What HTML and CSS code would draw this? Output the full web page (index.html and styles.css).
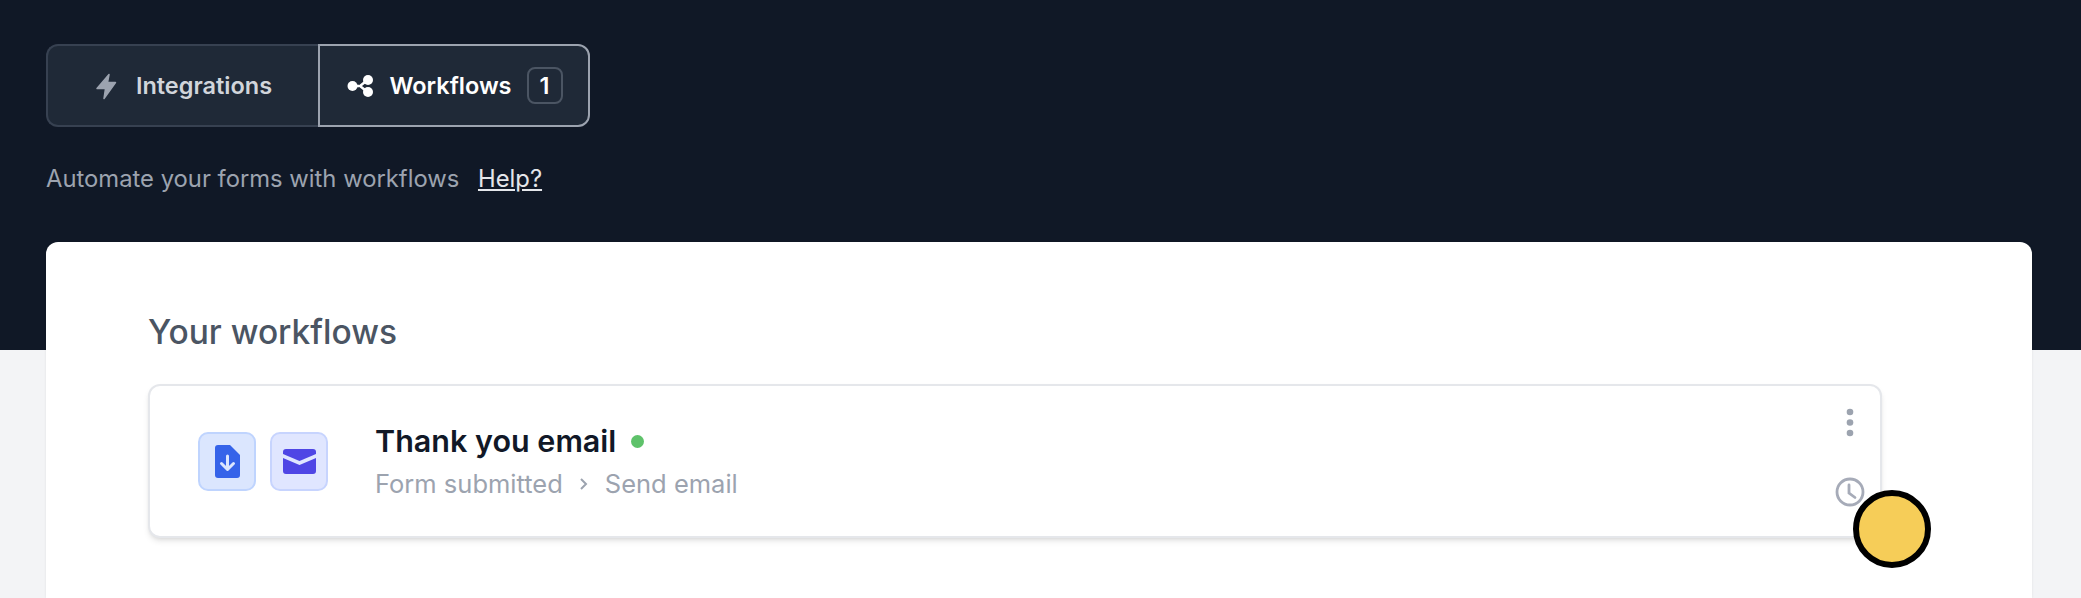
FILE: index.html
```html
<!DOCTYPE html>
<html>
<head>
  <title>Workflows</title>
  <link rel="stylesheet" href="styles.css">
</head>

<body>
  <div class="tabs">
    <a class="tab">
      <svg class="tab-icon" width="24" height="28" viewBox="0 0 24 28"><path d="M15 2.500 3 16.500h8.500L10 26.500 21.500 10.500h-8z" fill="#9ca3af" stroke="#9ca3af" stroke-width="1.500" stroke-linejoin="round"/></svg>
      <span>Integrations</span>
    </a>
    <a class="tab active">
      <svg class="tab-icon" width="27" height="26" viewBox="0 0 27 26"><path d="M5 13h7M20.500 7 13 13l7.500 6" fill="none" stroke="#fff" stroke-width="2.500"/><circle cx="5.500" cy="13" r="5" fill="#fff"/><circle cx="21" cy="7" r="5" fill="#fff"/><circle cx="21" cy="19" r="5" fill="#fff"/></svg>
      <span>Workflows</span>
      <span class="badge">1</span>
    </a>
  </div>

  <p class="intro">Automate your forms with workflows <a class="help">Help?</a></p>

  <div class="panel">
    <h2>Your workflows</h2>
    <div class="workflow">
      <div class="steps">
        <div class="step step-form">
          <svg width="25" height="33" viewBox="0 0 25 33"><path d="M3 0h12l10 10v20a3 3 0 0 1-3 3H3a3 3 0 0 1-3-3V3a3 3 0 0 1 3-3z" fill="#3563e9"/><path d="M12.500 11v13M6.500 18.500l6 6 6-6" fill="none" stroke="#dbe6fe" stroke-width="3" stroke-linecap="round" stroke-linejoin="round"/></svg>
        </div>
        <div class="step step-mail">
          <svg width="33" height="25" viewBox="0 0 33 25"><path d="M3 0h27a3 3 0 0 1 3 3v2l-16.500 7L0 5V3a3 3 0 0 1 3-3z" fill="#4f46e5"/><path d="M0 9l16.500 7L33 9v13a3 3 0 0 1-3 3H3a3 3 0 0 1-3-3z" fill="#4f46e5"/></svg>
        </div>
      </div>
      <div class="info">
        <div class="name">Thank you email <span class="dot"></span></div>
        <div class="desc">
          <span>Form submitted</span>
          <svg width="10" height="14" viewBox="0 0 10 14"><path d="m2 2 5 5-5 5" fill="none" stroke="#9ca3af" stroke-width="2"/></svg>
          <span>Send email</span>
        </div>
      </div>
      <div class="actions">
        <svg width="8" height="29" viewBox="0 0 8 29"><circle cx="4" cy="4" r="3.300" fill="#9ca3af"/><circle cx="4" cy="14.500" r="3.300" fill="#9ca3af"/><circle cx="4" cy="25" r="3.300" fill="#9ca3af"/></svg>
        <svg width="30" height="30" viewBox="0 0 30 30"><circle cx="15" cy="15" r="13" fill="none" stroke="#a6abb8" stroke-width="2.800"/><path d="M14 8v8l6 4.500" fill="none" stroke="#a6abb8" stroke-width="2.800" stroke-linecap="round"/></svg>
      </div>
    </div>
  </div>

  <div class="cursor"></div>
</body>

</html>
```

FILE: styles.css
```css
html,
body {
  height: 100%;
}

body {
  margin: 0;
  padding: 44px 49px 0 46px;
  box-sizing: border-box;
  overflow: hidden;
  position: relative;
  background: linear-gradient(#101826 350px, #f3f4f6 350px);
  font-family: "Inter", sans-serif;
}

.tabs {
  display: flex;
  width: 544px;
  height: 83px;
}

.tab {
  display: flex;
  align-items: center;
  justify-content: center;
  gap: 18px;
  box-sizing: border-box;
  background-color: #1f2937;
  border: 2px solid #374151;
  border-right: none;
  border-radius: 12px 0 0 12px;
  color: #d1d5db;
  font-size: 23.500px;
  font-weight: 600;
  width: 272px;
}

.tab.active {
  width: 272px;
  gap: 15px;
  padding-left: 2px;
  border: 2px solid #9ca3af;
  border-radius: 0 12px 12px 0;
  color: #fff;
}

.badge {
  display: flex;
  align-items: center;
  justify-content: center;
  width: 36px;
  height: 37px;
  box-sizing: border-box;
  border: 2px solid #4b5563;
  border-radius: 8px;
}

.intro {
  margin: 0;
  padding-top: 37px;
  height: 64px;
  box-sizing: border-box;
  color: #9ca3af;
  font-size: 23.800px;
  line-height: 30px;
}

.help {
  margin-left: 12px;
  color: #e5e7eb;
  text-decoration: underline;
}

.panel {
  margin-top: 51px;
  height: 356px;
  padding: 70px 150px 0 102px;
  box-sizing: border-box;
  background-color: #fff;
  border-radius: 12px 12px 0 0;
  box-shadow: 0 0 3px rgba(0, 0, 0, 0.08);
}

.panel h2 {
  margin: 0;
  color: #4b5563;
  font-size: 33.500px;
  font-weight: 500;
  line-height: 40px;
}

.workflow {
  display: flex;
  align-items: center;
  margin-top: 32px;
  height: 154px;
  box-sizing: border-box;
  padding: 0 24px 0 48px;
  border: 2px solid #e5e7eb;
  border-radius: 12px;
  background-color: #fff;
  box-shadow: 0 4px 6px -1px rgba(0, 0, 0, 0.1), 0 2px 4px -2px rgba(0, 0, 0, 0.1);
}

.steps {
  display: flex;
  gap: 14px;
}

.step {
  display: flex;
  align-items: center;
  justify-content: center;
  width: 58px;
  height: 59px;
  box-sizing: border-box;
  border-radius: 10px;
}

.step-form {
  background-color: #dbe6fe;
  border: 2px solid #bfd4fe;
}

.step-mail {
  background-color: #e0e6ff;
  border: 2px solid #c7d4fe;
}

.info {
  flex: 1;
  margin-left: 47px;
}

.name {
  display: flex;
  align-items: center;
  color: #111827;
  font-size: 30.500px;
  font-weight: 600;
  line-height: 40px;
}

.dot {
  width: 13px;
  height: 13px;
  margin-left: 15px;
  border-radius: 50%;
  background-color: #5ec26a;
}

.desc {
  display: flex;
  align-items: center;
  gap: 16px;
  margin-top: 6px;
  color: #9ca3af;
  font-size: 25.500px;
  line-height: 34px;
}

.actions {
  display: flex;
  flex-direction: column;
  align-items: center;
  justify-content: space-between;
  height: 99px;
  margin-top: -8px;
  margin-right: -9px;
}

.cursor {
  position: absolute;
  left: 1853px;
  top: 490px;
  width: 78px;
  height: 78px;
  box-sizing: border-box;
  border: 6px solid #000;
  border-radius: 50%;
  background-color: #f6cd58;
}
```
